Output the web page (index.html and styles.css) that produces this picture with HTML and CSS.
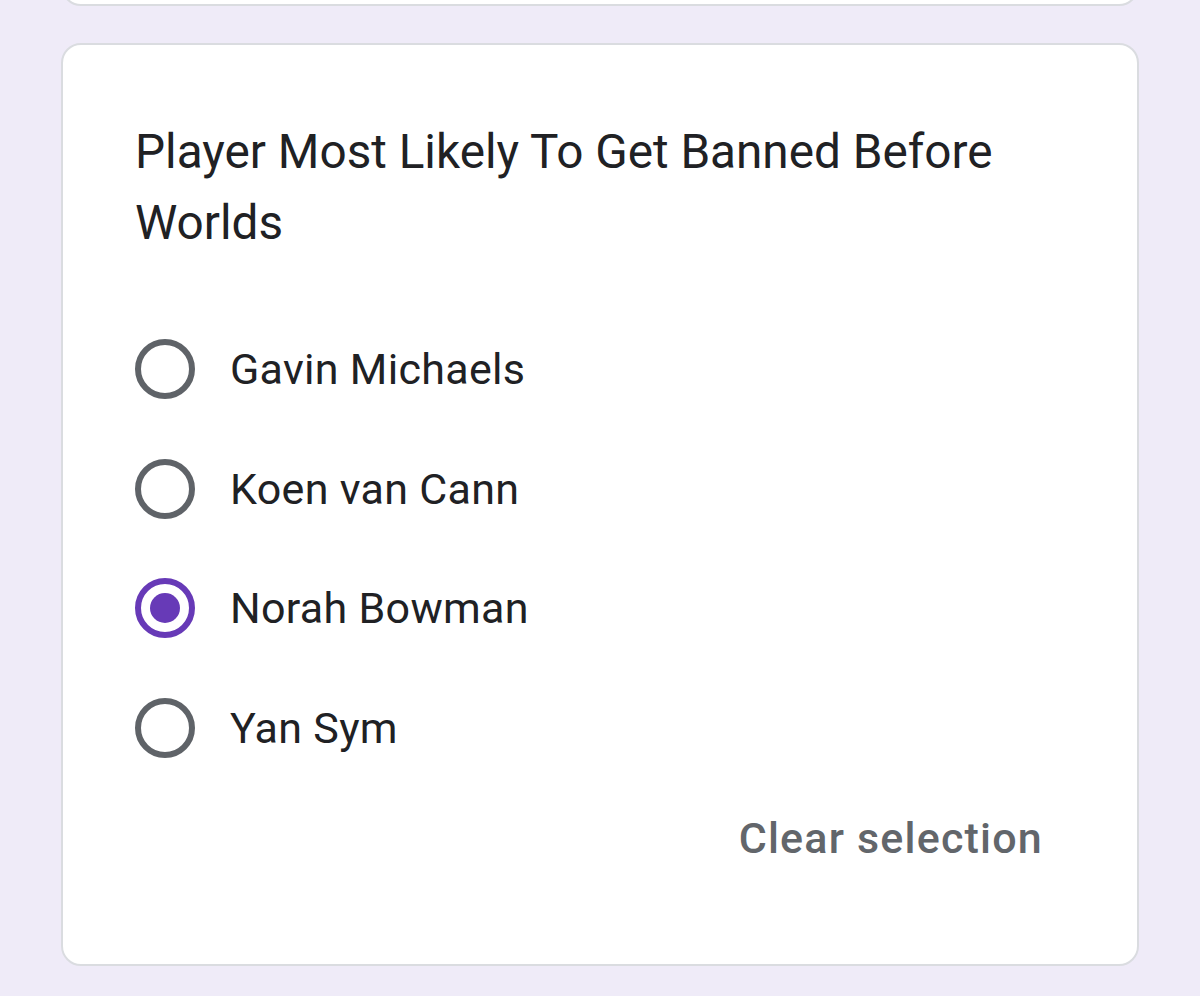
FILE: index.html
```html
<!DOCTYPE html>
<html lang="en">
<head>
<meta charset="utf-8">
<title>Form</title>
<link rel="stylesheet" href="styles.css">
</head>
<body>
<div class="page">
  <div class="card card-prev"></div>
  <div class="card question">
    <div class="title">Player Most Likely To Get Banned Before Worlds</div>
    <div class="options">
      <label class="option"><span class="radio"></span><span class="label">Gavin Michaels</span></label>
      <label class="option"><span class="radio"></span><span class="label">Koen van Cann</span></label>
      <label class="option"><span class="radio checked"></span><span class="label">Norah Bowman</span></label>
      <label class="option"><span class="radio"></span><span class="label">Yan Sym</span></label>
    </div>
    <div class="footer"><span class="clear">Clear selection</span></div>
  </div>
</div>
</body>
</html>
```
FILE: styles.css
```css
html, body {
  margin: 0;
  padding: 0;
  background: #efebf8;
  font-family: Roboto, "Noto Sans", sans-serif;
}
.page {
  padding: 0 61px;
  height: 996px;
  overflow: hidden;
}
.card {
  background: #fff;
  border: 2px solid #dadce0;
  border-radius: 20px;
  box-sizing: border-box;
}
.card-prev {
  height: 100px;
  margin-top: -94px;
}
.question {
  margin-top: 37px;
  height: 923px;
  padding: 72px 72px 0 72px;
}
.title {
  font-size: 47.7px;
  line-height: 71px;
  color: #202124;
}
.options {
  margin-top: 80px;
  display: flex;
  flex-direction: column;
  gap: 59.5px;
}
.option {
  display: flex;
  align-items: center;
  height: 60px;
}
.radio {
  width: 60px;
  height: 60px;
  box-sizing: border-box;
  border: 6px solid #5f6368;
  border-radius: 50%;
  display: flex;
  align-items: center;
  justify-content: center;
  flex: none;
}
.radio.checked {
  border-color: #673ab7;
}
.radio.checked::after {
  content: "";
  width: 30px;
  height: 30px;
  border-radius: 50%;
  background: #673ab7;
}
.label {
  margin-left: 35px;
  font-size: 43px;
  color: #202124;
  letter-spacing: 0.3px;
}
.footer {
  display: flex;
  justify-content: flex-end;
  margin-top: 55.5px;
  padding-right: 22px;
}
.clear {
  font-size: 43px;
  font-weight: 500;
  color: #62666b;
  letter-spacing: 1.2px;
}
```
